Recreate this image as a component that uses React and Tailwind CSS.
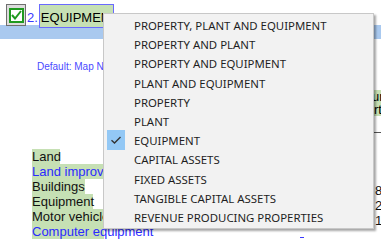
import React from 'react';

const options = [
  'PROPERTY, PLANT AND EQUIPMENT',
  'PROPERTY AND PLANT',
  'PROPERTY AND EQUIPMENT',
  'PLANT AND EQUIPMENT',
  'PROPERTY',
  'PLANT',
  'EQUIPMENT',
  'CAPITAL ASSETS',
  'FIXED ASSETS',
  'TANGIBLE CAPITAL ASSETS',
  'REVENUE PRODUCING PROPERTIES',
];

const rows = [
  { label: 'Land', link: false, fill: 'w-[28px]' },
  { label: 'Land improvements', link: true, fill: 'w-full' },
  { label: 'Buildings', link: false, fill: 'w-[53px]' },
  { label: 'Equipment', link: false, fill: 'w-[61px]' },
  { label: 'Motor vehicles', link: false, fill: 'w-full' },
  { label: 'Computer equipment', link: true, fill: 'w-full' },
];

function Check() {
  return (
    <svg width="12" height="10" viewBox="0 0 12 10" fill="none">
      <path d="M1.5 5.2 L4.5 8 L10.5 2" stroke="#333" strokeWidth="1.4" />
    </svg>
  );
}

function App() {
  return (
    <div className="relative w-[381px] h-[241px] overflow-hidden bg-white font-['Liberation_Sans',Arial,sans-serif]">
      {/* header */}
      <div className="flex items-start pl-[6px] pt-[4px] h-[25px]">
        <div className="w-[20px] h-[22px] border border-[#6f6f6f] bg-[#dcdcdc] flex items-center justify-center">
          <div className="w-[15px] h-[15px] border-2 border-[#1f9a1f] bg-white flex items-center justify-center">
            <svg width="11" height="10" viewBox="0 0 11 10" fill="none">
              <path d="M1 5 L4 8.5 L10 1" stroke="#1f9a1f" strokeWidth="2" />
            </svg>
          </div>
        </div>
        <span className="ml-[1px] mt-[6px] text-[13px] leading-[15px] text-[#3a3aff]">2.</span>
        <div className="ml-[1px] w-[75px] h-[24px] border border-[#6a6aff] bg-[#c6e0b4] text-[13px] leading-[15px] pl-[1px] pt-[5px] overflow-hidden whitespace-nowrap text-black">
          EQUIPMENT
        </div>
      </div>
      <div className="h-[14px] bg-[#a9c9ef]" />

      <div className="flex">
        <div className="w-[373px] shrink-0 pl-[37px]">
          <div className="mt-[22px] text-[10px] leading-[12px] text-[#4a4aff]">Default: Map Name</div>
          <div className="mt-[76px] ml-[-5px] w-[72px]">
            {rows.map((r) => (
              <div key={r.label} className="relative h-[15px] text-[13px] leading-[15px] whitespace-nowrap">
                <div className={`absolute left-0 top-0 h-[15px] bg-[#c6e0b4] ${r.fill}`} />
                <span className={`relative ${r.link ? 'text-[#2b2bff]' : 'text-[#111]'}`}>{r.label}</span>
              </div>
            ))}
          </div>
        </div>
        <div className="w-[8px] shrink-0 overflow-hidden">
          <div className="mt-[51px] h-[26px] bg-[#c6e0b4] text-[13px] leading-[13px] whitespace-nowrap">
            <div className="ml-[-1px]">un</div>
            <div className="ml-[1px]">rt</div>
          </div>
          <div className="mt-[16px] h-[1px] bg-[#555]" />
          <div className="mt-[50px] text-[13px] leading-[15px] text-[#111] pl-[2px]">
            <div>8</div>
            <div>2</div>
            <div>1</div>
          </div>
        </div>
      </div>

      {/* dropdown */}
      <div className="absolute left-[103px] top-[13px] w-[271px] h-[216px] pt-[2px] bg-[#f2f2f2] border border-[#c8c8c8] shadow-[2px_2px_2px_rgba(0,0,0,0.35)] font-['Noto_Sans','Open_Sans',sans-serif]">
        {options.map((o) => (
          <div key={o} className="relative h-[19.2px] flex items-center pl-[30px] text-[11.4px] text-[#1e1e1e]">
            {o === 'EQUIPMENT' && (
              <div className="absolute left-[3px] top-[-1px] w-[18px] h-[20px] bg-[#93c8f5] flex items-center justify-center">
                <Check />
              </div>
            )}
            <span>{o}</span>
          </div>
        ))}
      </div>
      <div className="absolute left-[300px] top-[237px] w-[4px] h-[1px] bg-[#3a3aff]" />
    </div>
  );
}

export default App;
